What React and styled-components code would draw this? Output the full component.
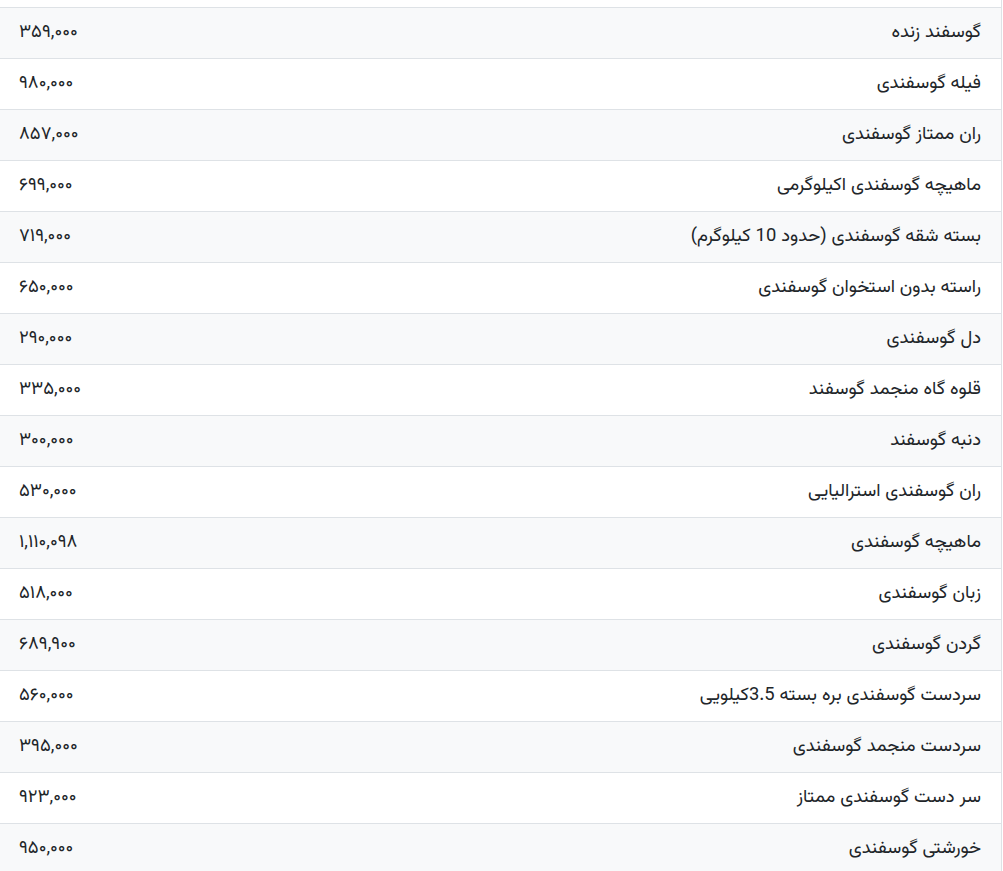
import React from "react";
import styled, { createGlobalStyle } from "styled-components";

const Global = createGlobalStyle`
  html, body { margin: 0; padding: 0; background: #fff; }
  body { font-family: "Vazirmatn", "Noto Sans Arabic", "DejaVu Sans", sans-serif; color: #212529; }
`;

const Wrap = styled.div`
  width: 1002px;
  box-sizing: border-box;
  border-right: 1px solid #dee2e6;
  padding-top: 7px;
  direction: rtl;
`;

const Row = styled.div`
  display: flex;
  justify-content: space-between;
  align-items: center;
  height: 50px;
  border-top: 1px solid #dee2e6;
  padding: 0 20px 0 19px;
  background: ${(p) => (p.$striped ? "#f8f9fa" : "#fff")};
  font-size: 18.4px;
  line-height: 1;
`;

const Name = styled.span`
  white-space: nowrap;
`;

const Price = styled.span`
  white-space: nowrap;
  direction: ltr;
  unicode-bidi: isolate;
`;

const toFa = (s) => s.replace(/[0-9]/g, (d) => "۰۱۲۳۴۵۶۷۸۹"[+d]);

const items = [
  ["گوسفند زنده", "359,000"],
  ["فیله گوسفندی", "980,000"],
  ["ران ممتاز گوسفندی", "857,000"],
  ["ماهیچه گوسفندی اکیلوگرمی", "699,000"],
  ["بسته شقه گوسفندی (حدود 10 کیلوگرم)", "719,000"],
  ["راسته بدون استخوان گوسفندی", "650,000"],
  ["دل گوسفندی", "290,000"],
  ["قلوه گاه منجمد گوسفند", "335,000"],
  ["دنبه گوسفند", "300,000"],
  ["ران گوسفندی استرالیایی", "530,000"],
  ["ماهیچه گوسفندی", "1,110,098"],
  ["زبان گوسفندی", "518,000"],
  ["گردن گوسفندی", "689,900"],
  ["سردست گوسفندی بره بسته 3.5کیلویی", "560,000"],
  ["سردست منجمد گوسفندی", "395,000"],
  ["سر دست گوسفندی ممتاز", "923,000"],
  ["خورشتی گوسفندی", "950,000"],
];

export default function App() {
  return (
    <>
      <Global />
      <Wrap>
        {items.map(([name, price], i) => (
          <Row key={i} $striped={i % 2 === 0}>
            <Name>{name}</Name>
            <Price>{toFa(price)}</Price>
          </Row>
        ))}
      </Wrap>
    </>
  );
}
